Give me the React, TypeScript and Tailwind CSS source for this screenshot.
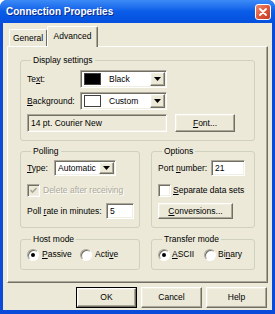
import React from 'react';

const sunken =
  'border border-t-[#ACA899] border-l-[#ACA899] border-b-white border-r-white shadow-[inset_1px_1px_0_#716F64,inset_-1px_-1px_0_#F1EFE2]';
const raised =
  'border border-t-white border-l-white border-b-[#716F64] border-r-[#716F64] shadow-[inset_-1px_-1px_0_#ACA899,inset_1px_1px_0_#F1EFE2]';

function Arrow() {
  return (
    <svg width="7" height="4" viewBox="0 0 7 4">
      <polygon points="0,0 7,0 3.5,4" fill="#000" />
    </svg>
  );
}

function DropButton() {
  return (
    <div className={`${raised} w-[15px] h-full flex items-center justify-center bg-[#ECE9D8]`}>
      <Arrow />
    </div>
  );
}

function ColorCombo({ swatch, label }: { swatch: string; label: string }) {
  return (
    <div className={`${sunken} w-[87px] h-[18px] bg-white flex items-stretch p-[1px]`}>
      <div className="flex-1 flex items-center pl-[2px]">
        <div className={`w-[17px] h-[12px] border border-[#404040] ${swatch}`} />
        <span className="ml-[8px]">{label}</span>
      </div>
      <DropButton />
    </div>
  );
}

function Check({ checked, disabled }: { checked?: boolean; disabled?: boolean }) {
  return (
    <div
      className={`${sunken} w-[13px] h-[13px] flex items-center justify-center ${disabled ? 'bg-[#ECE9D8]' : 'bg-white'}`}
    >
      {checked && (
        <svg width="7" height="7" viewBox="0 0 7 7">
          <polyline points="0.5,3 2.5,5 6.5,1" fill="none" stroke={disabled ? '#ACA899' : '#000'} strokeWidth="1.6" />
        </svg>
      )}
    </div>
  );
}

function Radio({ on }: { on?: boolean }) {
  return (
    <div
      className={`w-[12px] h-[12px] rounded-full bg-white border border-t-[#ACA899] border-l-[#ACA899] border-b-white border-r-white shadow-[inset_1px_1px_0_#716F64] flex items-center justify-center`}
    >
      {on && <div className="w-[4px] h-[4px] rounded-full bg-black" />}
    </div>
  );
}

function Group({ title, className, children }: { title: string; className?: string; children: React.ReactNode }) {
  return (
    <fieldset className={`border border-[#D0D0BF] rounded-[3px] pl-[6px] pr-[4px] pb-[8px] ${className ?? ''}`}>
      <legend className="ml-[4px] px-[2px] leading-[11px]">{title}</legend>
      {children}
    </fieldset>
  );
}

function Button({ children, isDefault }: { children: React.ReactNode; isDefault?: boolean }) {
  return (
    <div className={`w-[61px] h-[21px] ${isDefault ? 'border border-black' : ''}`}>
      <div className={`${raised} w-full h-full flex items-center justify-center bg-[#ECE9D8]`}>{children}</div>
    </div>
  );
}

export default function App() {
  return (
    <div className="w-[275px] h-[314px] flex flex-col bg-[#0A4BD9] rounded-t-[7px] overflow-hidden font-['Liberation_Sans',Arial,sans-serif] text-[8.5px] text-black">
      {/* title bar */}
      <div className="h-[23px] flex items-center pl-[6px] pr-[4px] bg-gradient-to-b from-[#3D8BF7] via-[#0A5CE8] to-[#0550DE]">
        <span className="text-white font-bold text-[10px] [text-shadow:1px_1px_0_#0A2A8C]">Connection Properties</span>
        <div className="ml-auto w-[16px] h-[16px] rounded-[3px] border border-white bg-gradient-to-br from-[#EE8A6C] via-[#E0583B] to-[#C4381E] flex items-center justify-center">
          <svg width="8" height="8" viewBox="0 0 8 8">
            <path d="M1 1 L7 7 M7 1 L1 7" stroke="#fff" strokeWidth="1.8" strokeLinecap="round" />
          </svg>
        </div>
      </div>

      <div className="flex-1 mx-[3px] mb-[4px] bg-[#ECE9D8] px-[4px] pt-[3px] flex flex-col">
        {/* tabs */}
        <div className="flex items-end h-[20px] pl-[2px]">
          <div className="h-[17px] w-[38px] border-t border-l border-white border-r border-r-[#716F64] rounded-t-[2px] flex items-center justify-center">
            General
          </div>
          <div className="relative z-10 -mb-px h-[21px] w-[51px] bg-[#ECE9D8] border-t border-l border-white border-r border-r-[#716F64] shadow-[inset_-1px_0_0_#ACA899] rounded-t-[2px] flex items-center justify-center pb-[1px]">
            Advanced
          </div>
        </div>

        {/* panel */}
        <div className="h-[237px] border border-t-white border-l-white border-b-[#716F64] border-r-[#716F64] shadow-[inset_-1px_-1px_0_#ACA899] pt-[8px] px-[12px] flex flex-col">
          <Group title="Display settings">
            <div className="pt-[4px] flex flex-col gap-[4px]">
              <div className="flex items-center h-[18px]">
                <span className="w-[53px]">
                  Te<u>x</u>t:
                </span>
                <ColorCombo swatch="bg-black" label="Black" />
              </div>
              <div className="flex items-center h-[18px]">
                <span className="w-[53px]">
                  <u>B</u>ackground:
                </span>
                <ColorCombo swatch="bg-white" label="Custom" />
              </div>
              <div className="flex items-center h-[18px]">
                <div className={`${sunken} w-[140px] h-[18px] flex items-center pl-[3px]`}>14 pt. Courier New</div>
                <div className="ml-[8px]">
                  <div className={`${raised} w-[60px] h-[18px] flex items-center justify-center`}>
                    <span>
                      <u>F</u>ont...
                    </span>
                  </div>
                </div>
              </div>
            </div>
          </Group>

          <div className="mt-[5px] flex gap-[11px]">
            <Group title="Polling" className="w-[120px]">
              <div className="pt-[3px] flex flex-col">
                <div className="flex items-center h-[16px]">
                  <span className="w-[27px]">
                    <u>T</u>ype:
                  </span>
                  <div className={`${sunken} w-[62px] h-[16px] bg-white flex items-stretch p-[1px]`}>
                    <div className="flex-1 flex items-center pl-[2px]">Automatic</div>
                    <DropButton />
                  </div>
                </div>
                <div className="mt-[8px] flex items-center h-[13px]">
                  <Check checked disabled />
                  <span className="ml-[3px] text-[#ACA899] [text-shadow:1px_1px_0_#fff]">Delete after receiving</span>
                </div>
                <div className="mt-[6px] flex items-center h-[16px]">
                  <span className="w-[79px]">
                    Poll <u>r</u>ate in minutes:
                  </span>
                  <div className={`${sunken} w-[28px] h-[16px] bg-white flex items-center pl-[3px]`}>5</div>
                </div>
              </div>
            </Group>

            <Group title="Options" className="w-[104px]">
              <div className="pt-[3px] flex flex-col">
                <div className="flex items-center h-[16px]">
                  <span className="w-[53px]">
                    Port <u>n</u>umber:
                  </span>
                  <div className={`${sunken} w-[34px] h-[16px] bg-white flex items-center pl-[3px]`}>21</div>
                </div>
                <div className="mt-[8px] flex items-center h-[13px]">
                  <Check />
                  <span className="ml-[2px]">
                    <u>S</u>eparate data sets
                  </span>
                </div>
                <div className="mt-[6px]">
                  <div className={`${raised} w-[75px] h-[16px] flex items-center justify-center`}>
                    <span>
                      <u>C</u>onversions...
                    </span>
                  </div>
                </div>
              </div>
            </Group>
          </div>

          <div className="mt-[6px] flex gap-[11px]">
            <Group title="Host mode" className="w-[120px]">
              <div className="pt-[3px] flex items-center h-[16px]">
                <div className="w-[53px] flex items-center">
                  <Radio on />
                  <span className="ml-[3px]">
                    <u>P</u>assive
                  </span>
                </div>
                <div className="flex items-center">
                  <Radio />
                  <span className="ml-[3px]">
                    Acti<u>v</u>e
                  </span>
                </div>
              </div>
            </Group>
            <Group title="Transfer mode" className="w-[104px]">
              <div className="pt-[3px] flex items-center h-[16px]">
                <div className="w-[46px] flex items-center">
                  <Radio on />
                  <span className="ml-[2px]">
                    <u>A</u>SCII
                  </span>
                </div>
                <div className="flex items-center">
                  <Radio />
                  <span className="ml-[2px]">
                    Bi<u>n</u>ary
                  </span>
                </div>
              </div>
            </Group>
          </div>
        </div>

        {/* buttons */}
        <div className="mt-[4px] flex justify-end gap-[4px] pr-[1px]">
          <Button isDefault>OK</Button>
          <Button>Cancel</Button>
          <Button>Help</Button>
        </div>
      </div>
    </div>
  );
}
